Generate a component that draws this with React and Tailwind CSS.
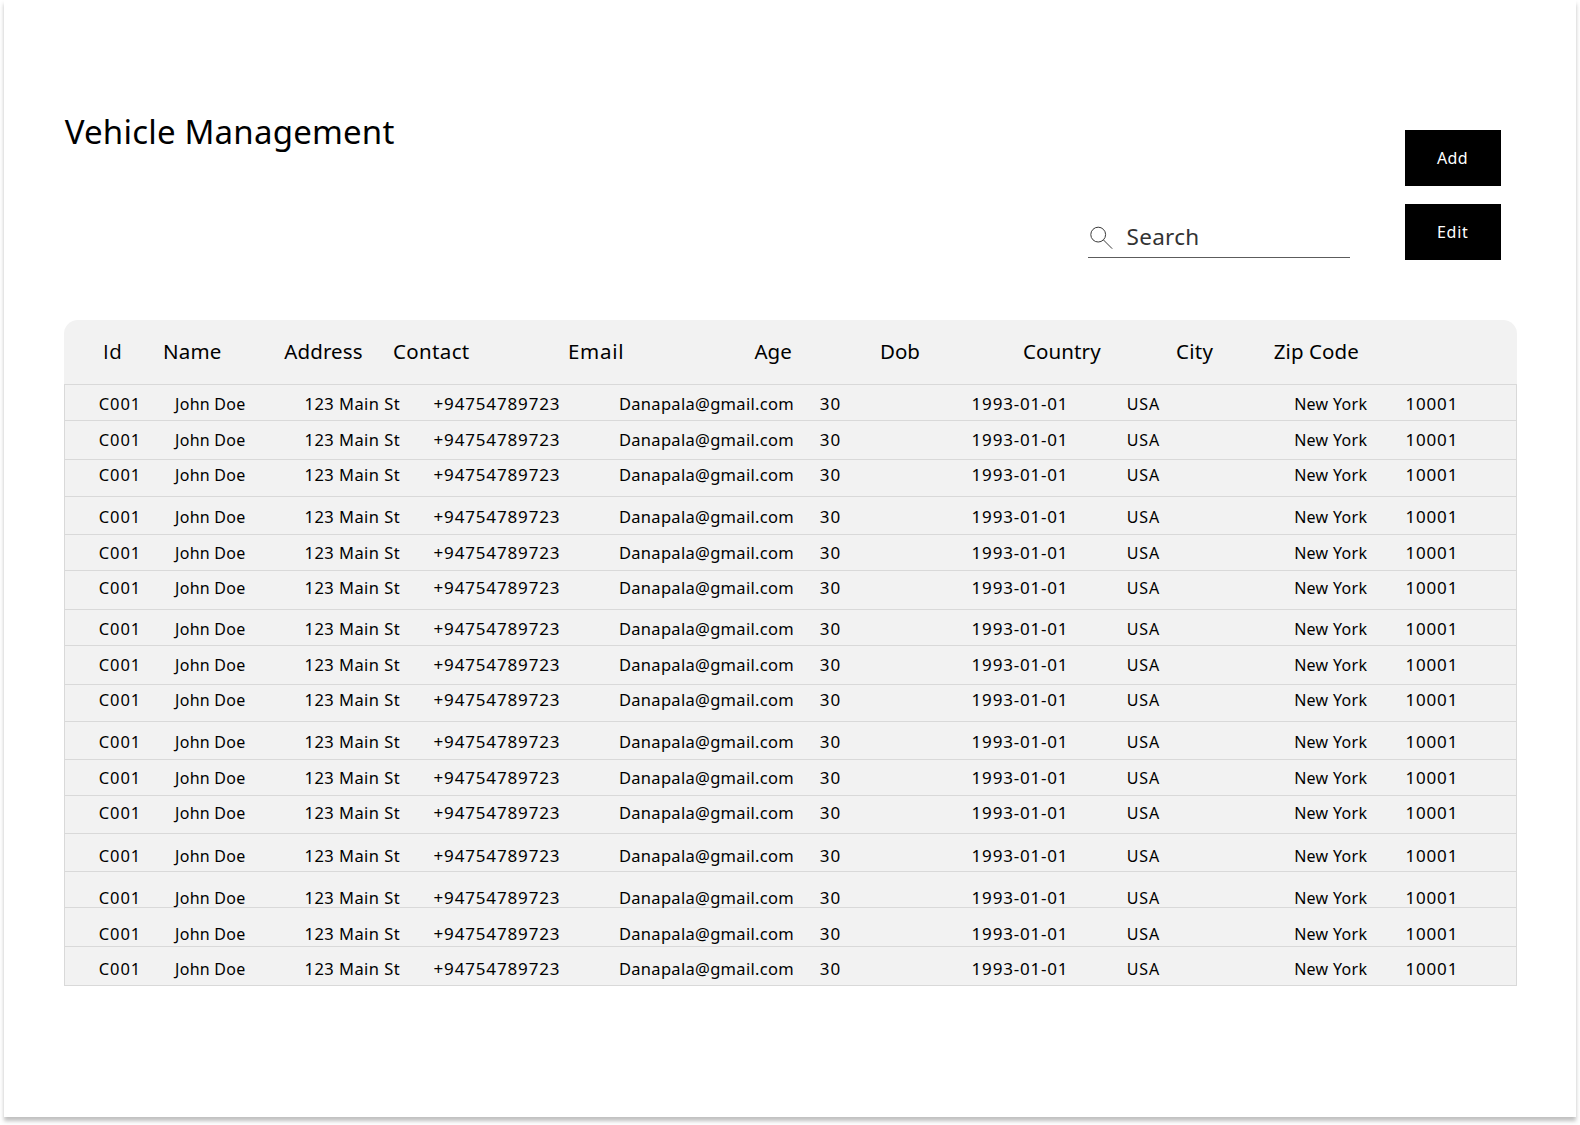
import React from "react";

const headers = [
  { label: "Id", style: "font-['Open_Sans'] text-[20.5px] tracking-[0.6px] pl-px" },
  { label: "Name", style: "text-[20.5px] tracking-[0.2px] pl-[0.5px]" },
  { label: "Address", style: "text-[20.5px] tracking-[0.1px]" },
  { label: "Contact", style: "text-[20.5px] tracking-[0.35px] pl-[0.5px]" },
  { label: "Email", style: "text-[20.5px] tracking-[0.7px] pl-[0.5px]" },
  { label: "Age", style: "text-[20.5px]" },
  { label: "Dob", style: "text-[20.5px] pl-[0.5px]" },
  { label: "Country", style: "text-[20.5px] tracking-[0.1px] pl-[0.7px]" },
  { label: "City", style: "text-[20.5px] tracking-[0.3px] pl-[0.7px]" },
  { label: "Zip Code", style: "text-[20.5px] tracking-[0.1px]" },
];

const cells = [
  { key: "id", style: "text-[16.5px] tracking-[0.9px] pl-[0.5px]" },
  { key: "name", style: "tracking-[0.25px] -ml-[0.7px]" },
  { key: "address", style: "text-[16.5px] tracking-[0.45px]" },
  { key: "contact", style: "text-[17px] tracking-[0.85px] pl-[0.5px]" },
  { key: "email", style: "text-[16.5px] tracking-[0.3px] pl-[0.7px]" },
  { key: "age", style: "text-[17px] tracking-[1px] pl-[0.5px]" },
  { key: "dob", style: "text-[17px] tracking-[0.8px]" },
  { key: "country", style: "tracking-[0.8px] pl-[0.7px]" },
  { key: "city", style: "tracking-[0.3px] pl-[0.8px]" },
  { key: "zip", style: "text-[17px] tracking-[0.8px]" },
];

const record = {
  id: "C001",
  name: "John Doe",
  address: "123 Main St",
  contact: "+94754789723",
  email: "Danapala@gmail.com",
  age: "30",
  dob: "1993-01-01",
  country: "USA",
  city: "New York",
  zip: "10001",
};

// Height and top padding of each table row
const rowSizes = [
  "h-[36px] pt-[9px]",
  "h-[39px] pt-[9px]",
  "h-[37px] pt-[5px]",
  "h-[38px] pt-[10px]",
  "h-[36px] pt-[8px]",
  "h-[39px] pt-[7px]",
  "h-[36px] pt-[9px]",
  "h-[39px] pt-[9px]",
  "h-[37px] pt-[5px]",
  "h-[38px] pt-[10px]",
  "h-[36px] pt-[8px]",
  "h-[38px] pt-[7px]",
  "h-[38px] pt-[12px]",
  "h-[36px] pt-[16px]",
  "h-[39px] pt-[16px]",
  "h-[39px] pt-[12px]",
];

function Button({ children, style }) {
  return (
    <button className={`h-14 w-24 bg-black pl-8 text-left text-base leading-5 text-white ${style}`}>
      {children}
    </button>
  );
}

function SearchBox() {
  return (
    <div className="flex h-[38px] w-[262px] items-start border-b border-[#5c5c5c]">
      <svg className="mt-[5px] size-[26px] shrink-0" viewBox="0 0 26 26" fill="none" stroke="#3a3a3a" strokeWidth="1">
        <circle cx="10.2" cy="9.6" r="7.4" />
        <path d="M15.4 14.9 24.2 23.7" />
      </svg>
      <span className="ml-[12.5px] mt-[3px] text-[22.5px] leading-7 tracking-[0.3px] text-[#333333]">Search</span>
    </div>
  );
}

export default function App() {
  return (
    <div className="h-[1125px] w-[1580px] overflow-hidden bg-white px-1 font-['Noto_Sans',sans-serif] text-black">
      <div className="h-[1117px] bg-white pl-[60px] shadow-[0_4px_4px_rgba(0,0,0,0.25)]">
        <header className="flex h-[320px] items-start">
          <h1 className="mt-[112px] w-[1024px] pl-[0.7px] text-[33px] leading-10 tracking-[0.2px]">Vehicle Management</h1>
          <div className="mt-[220px]">
            <SearchBox />
          </div>
          <div className="ml-[55px] mt-[130px] flex flex-col gap-[18px]">
            <Button style="tracking-[0.4px]">Add</Button>
            <Button style="tracking-[0.7px]">Edit</Button>
          </div>
        </header>

        <section className="w-[1453px]">
          <div className="grid h-16 grid-cols-[60.5px_121.8px_108.2px_175px_187px_125px_142.8px_153px_98.4px_1fr] items-baseline rounded-t-[14px] bg-[#f2f2f2] pl-[38px] pt-[17px] text-xl leading-7 whitespace-nowrap">
            {headers.map((h) => (
              <span key={h.label} className={`leading-7 ${h.style}`}>
                {h.label}
              </span>
            ))}
          </div>
          <div className="border-x border-b border-[#d9d9d9] bg-[#f2f2f2]">
            {rowSizes.map((size, i) => (
              <div
                key={i}
                className={`grid grid-cols-[77.5px_128.8px_128.4px_185.3px_201px_152.3px_154.6px_167.2px_112.2px_1fr] items-baseline border-t border-[#d9d9d9] pl-[33.3px] text-base leading-5 whitespace-nowrap ${size}`}
              >
                {cells.map((c) => (
                  <span key={c.key} className={`leading-5 ${c.style}`}>
                    {record[c.key]}
                  </span>
                ))}
              </div>
            ))}
          </div>
        </section>
      </div>
    </div>
  );
}
